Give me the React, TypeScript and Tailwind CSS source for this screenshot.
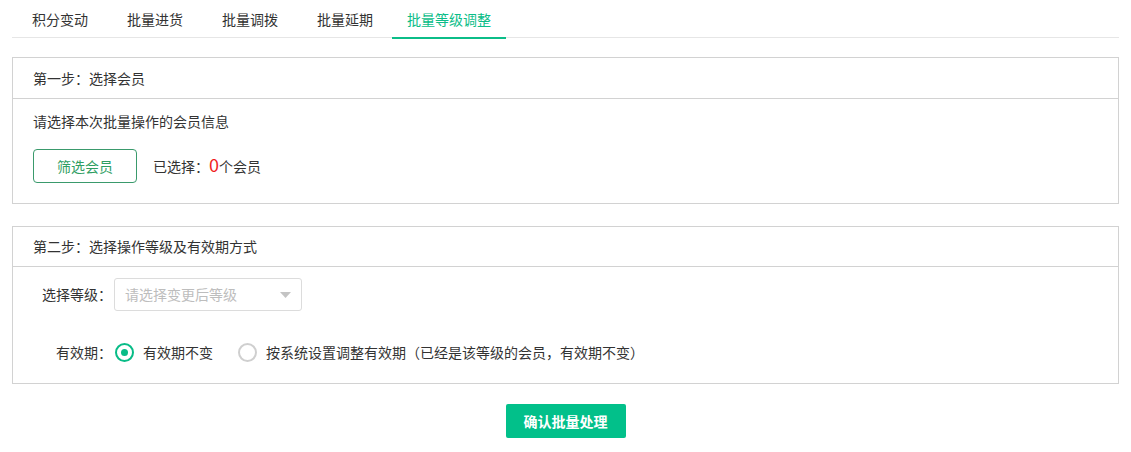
import React, { useState } from 'react';

const TABS = ['积分变动', '批量进货', '批量调拨', '批量延期', '批量等级调整'];
const TAB_MARGINS = ['ml-[5px]', 'ml-[9px]', 'ml-[9px]', 'ml-[9px]', 'ml-[4px]'];

function Radio({ checked, label, onClick }: { checked: boolean; label: string; onClick: () => void }) {
  return (
    <button onClick={onClick} className="flex items-center">
      {checked ? (
        <span className="flex h-[19px] w-[19px] items-center justify-center rounded-full border-2 border-[#08bc87]">
          <span className="h-[7px] w-[7px] rounded-full bg-[#08bc87]" />
        </span>
      ) : (
        <span className="h-[19px] w-[19px] rounded-full border-2 border-[#cfcfcf]" />
      )}
      <span className="ml-[9px] text-[14px] text-[#333]">{label}</span>
    </button>
  );
}

export default function App() {
  const [tab, setTab] = useState(4);
  const [mode, setMode] = useState(0);

  return (
    <div className="min-h-[452px] bg-white px-[12px] text-[#333]" style={{ fontFamily: '"Noto Sans CJK SC", "Noto Sans", sans-serif' }}>
      <div className="flex h-[38px] border-b border-[#e6e6e6]">
        {TABS.map((t, i) => (
          <button
            key={t}
            onClick={() => setTab(i)}
            className={`${TAB_MARGINS[i]} relative h-[38px] px-[15px] text-[14px] leading-[36px] ${
              tab === i ? 'text-[#0bbd88]' : 'text-[#333]'
            }`}
          >
            {t}
            {tab === i && <span className="absolute bottom-[-1px] left-0 right-0 h-[2px] bg-[#0bbd88]" />}
          </button>
        ))}
      </div>

      <div className="mt-[19px] border border-[#d2d2d2]">
        <div className="flex h-[41px] items-center border-b border-[#d2d2d2] pl-[20px] text-[14px]">第一步：选择会员</div>
        <div className="pl-[20px] pt-[12px] pb-[20px]">
          <div className="text-[14px] leading-[20px]">请选择本次批量操作的会员信息</div>
          <div className="mt-[18px] flex items-center">
            <button className="h-[34px] w-[104px] rounded-[4px] border border-[#3a9a6c] text-[14px] text-[#2f9e63]">筛选会员</button>
            <div className="ml-[16px] flex items-baseline text-[14px]">
              已选择：<span className="text-[18px] leading-none text-[#f01f1f]">0</span>个会员
            </div>
          </div>
        </div>
      </div>

      <div className="mt-[22px] border border-[#d2d2d2]">
        <div className="flex h-[40px] items-center border-b border-[#d2d2d2] pl-[20px] text-[14px]">第二步：选择操作等级及有效期方式</div>
        <div className="pt-[11px] pb-[21px]">
          <div className="flex items-center">
            <div className="w-[99px] text-right text-[14px]">选择等级：</div>
            <div className="ml-[2px] flex h-[33px] w-[188px] items-center justify-between rounded-[3px] border border-[#dcdcdc] pl-[10px] pr-[10px]">
              <span className="text-[14px] text-[#bdbdbd]">请选择变更后等级</span>
              <svg width="11" height="6" viewBox="0 0 11 6">
                <path d="M0 0h11L5.5 6z" fill="#c4c4c4" />
              </svg>
            </div>
          </div>
          <div className="mt-[31px] flex h-[20px] items-center">
            <div className="w-[99px] text-right text-[14px]">有效期：</div>
            <div className="ml-[3px] flex items-center">
              <Radio checked={mode === 0} label="有效期不变" onClick={() => setMode(0)} />
              <div className="ml-[25px]">
                <Radio checked={mode === 1} label="按系统设置调整有效期（已经是该等级的会员，有效期不变）" onClick={() => setMode(1)} />
              </div>
            </div>
          </div>
        </div>
      </div>

      <div className="mt-[20px] flex justify-center">
        <button className="h-[34px] w-[120px] rounded-[2px] bg-[#02c08a] text-[14px] font-bold text-white">确认批量处理</button>
      </div>
    </div>
  );
}
